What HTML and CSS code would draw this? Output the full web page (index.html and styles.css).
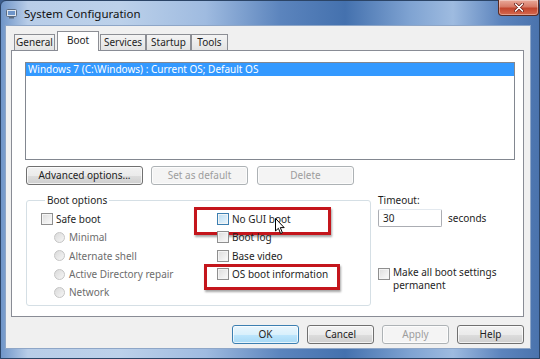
FILE: index.html
```html
<!DOCTYPE html>
<html>
<head>
<meta charset="utf-8">
<link rel="stylesheet" href="styles.css">
</head>
<body>
<div class="window">
  <div class="titlebar">
    <svg class="appicon" width="11" height="10" viewBox="0 0 11 10">
      <rect x="0.5" y="0.5" width="10" height="7" rx="1" fill="#dfe7f1" stroke="#5b6b80"/>
      <rect x="2" y="2" width="7" height="4" fill="#6e95c9"/>
      <rect x="3" y="8" width="5" height="1.5" fill="#5b6b80"/>
    </svg>
    <span class="title">System Configuration</span>
    <div class="close">
      <svg width="10" height="9" viewBox="0 0 10 9">
        <path d="M1.5 1 L8.5 8 M8.5 1 L1.5 8" stroke="#6b1b12" stroke-width="3" stroke-linecap="round"/>
        <path d="M1.5 1 L8.5 8 M8.5 1 L1.5 8" stroke="#ffffff" stroke-width="1.6" stroke-linecap="round"/>
      </svg>
    </div>
  </div>
  <div class="client">
    <div class="tabs">
      <div class="tab t1">General</div>
      <div class="tab active">Boot</div>
      <div class="tab t3">Services</div>
      <div class="tab t4">Startup</div>
      <div class="tab t5">Tools</div>
    </div>
    <div class="pane">
      <div class="listbox">
        <div class="item sel">Windows 7 (C:\Windows) : Current OS; Default OS</div>
      </div>
      <div class="btnrow">
        <div class="btn adv">Advanced options...</div>
        <div class="btn dis w97">Set as default</div>
        <div class="btn dis w97">Delete</div>
      </div>
      <div class="lower">
        <fieldset class="group">
          <legend>Boot options</legend>
          <div class="cols">
            <div class="col c1">
              <div class="row"><span class="chk"></span>Safe boot</div>
              <div class="row sub dim"><span class="radio"></span>Minimal</div>
              <div class="row sub dim"><span class="radio"></span>Alternate shell</div>
              <div class="row sub dim"><span class="radio"></span>Active Directory repair</div>
              <div class="row sub dim"><span class="radio"></span>Network</div>
            </div>
            <div class="col c2">
              <div class="row"><span class="chk hot"></span>No GUI boot
                <div class="mark m1"></div>
                <svg class="cursor" width="10" height="17" viewBox="0 0 10 17">
                  <path d="M0.5 0.5 L0.5 13 L3.4 10.3 L5.6 15.5 L7.4 14.7 L5.3 9.6 L9.2 9.6 Z" fill="#ffffff" stroke="#000000" stroke-width="1" stroke-linejoin="round"/>
                </svg>
              </div>
              <div class="row"><span class="chk"></span>Boot log</div>
              <div class="row"><span class="chk"></span>Base video</div>
              <div class="row"><span class="chk"></span>OS boot information
                <div class="mark m2"></div>
              </div>
            </div>
          </div>
        </fieldset>
        <div class="side">
          <div class="lbl">Timeout:</div>
          <div class="trow"><div class="input">30</div><span>seconds</span></div>
          <div class="perm"><span class="chk"></span><span class="ptext">Make all boot settings permanent</span></div>
        </div>
      </div>
    </div>
    <div class="dlgbtns">
      <div class="btn def">OK</div>
      <div class="btn">Cancel</div>
      <div class="btn dis">Apply</div>
      <div class="btn">Help</div>
    </div>
  </div>
</div>
</body>
</html>
```
FILE: styles.css
```css
* { box-sizing: border-box; }
html, body { margin: 0; padding: 0; }
body {
  width: 540px;
  height: 359px;
  overflow: hidden;
  font-family: "Noto Sans", "Open Sans", sans-serif;
  font-size: 10px;
  color: #1e1e1e;
  background: #3d5f8f;
}
.window {
  width: 540px;
  height: 359px;
  display: flex;
  flex-direction: column;
  padding: 0 8px 9px 4px;
  border-radius: 6px 6px 0 0;
  border: 1px solid #2b4466;
  background:
    linear-gradient(to right, #6f95c8 0%, #b8cde8 5%, #bcd1ea 22%, #9fbbe0 38%, #5b84bd 52%, #4471ae 64%, #7fa3d2 76%, #9ebbe0 84%, #5c84bd 93%, #4a73ad 100%);
}
.titlebar {
  height: 24px;
  flex: none;
  display: flex;
  align-items: center;
  position: relative;
  padding-left: 1px;
}
.appicon { flex: none; margin-top: 1px; }
.title {
  margin-left: 7px;
  font-size: 11.5px;
  color: #111;
  margin-top: 1px;
}
.close {
  position: absolute;
  right: -8px;
  top: -1px;
  width: 41px;
  height: 16px;
  border: 1px solid #5a2a22;
  border-top: none;
  border-radius: 0 0 4px 4px;
  background: linear-gradient(to bottom, #e9a99a 0%, #d77a66 45%, #c2452d 55%, #d4694f 100%);
  display: flex;
  align-items: center;
  justify-content: center;
  box-shadow: inset 0 0 0 1px rgba(255,255,255,0.35);
}
.client {
  flex: 1;
  background: #f0f0f0;
  border: 1px solid #8ea6c7;
  display: flex;
  flex-direction: column;
  padding: 0 6px 0 5px;
}
.tabs {
  display: flex;
  align-items: flex-end;
  height: 24px;
  padding-left: 3px;
  position: relative;
  z-index: 2;
}
.tab {
  height: 16px;
  border: 1px solid #8c8e94;
  border-bottom: none;
  background: linear-gradient(to bottom, #f4f4f4, #e3e3e3);
  line-height: 15px;
  text-align: center;
  color: #1e1e1e;
}
.t1 { width: 41px; margin-right: 2px; }
.t3 { width: 46px; }
.t4 { width: 45px; }
.t5 { width: 37px; }
.tab.active {
  width: 42px;
  height: 20px;
  margin: 0 1px -1px 0;
  background: #ffffff;
  line-height: 16px;
}
.pane {
  height: 267px;
  flex: none;
  background: #ffffff;
  border: 1px solid #898c95;
  padding: 11px 0 0 13px;
  display: flex;
  flex-direction: column;
}
.listbox {
  width: 490px;
  height: 98px;
  border: 1px solid #828790;
  background: #fff;
}
.item {
  height: 13px;
  line-height: 13px;
  padding-left: 2px;
}
.item.sel { background: #3399ff; color: #ffffff; }
.btn {
  height: 19px;
  line-height: 17px;
  text-align: center;
  border: 1px solid #707070;
  border-radius: 3px;
  background: linear-gradient(to bottom, #f2f2f2 0%, #ebebeb 50%, #dddddd 51%, #cfcfcf 100%);
  box-shadow: inset 0 0 0 1px rgba(255,255,255,0.7);
  color: #1e1e1e;
  width: 67px;
}
.btn.dis {
  color: #9d9d9d;
  border-color: #adb2b5;
  background: #f4f4f4;
}
.btn.def {
  border-color: #3c7fb1;
  background: linear-gradient(to bottom, #eaf6fd 0%, #d9f0fc 50%, #bee6fd 51%, #a7d9f5 100%);
}
.btnrow {
  display: flex;
  gap: 8px;
  margin-top: 6px;
  margin-left: 1px;
}
.btn.adv { width: 117px; }
.btn.w97 { width: 97px; }
.btnrow .btn.w97:last-child { margin-left: 1px; }
.lower {
  display: flex;
  margin-top: 9px;
  margin-left: 1px;
  gap: 7px;
}
.group {
  margin: 0;
  width: 345px;
  border: 1px solid #d5dfe5;
  border-radius: 3px;
  padding: 3px 0 4px 14px;
}
.group legend {
  padding: 0 2px;
  margin-left: 4px;
  line-height: 13px;
}
.cols { display: flex; }
.col { display: flex; flex-direction: column; }
.c1 { width: 176px; }
.row {
  position: relative;
  height: 18.3px;
  display: flex;
  align-items: center;
}
.row.sub { padding-left: 13px; }
.dim { color: #6d6d6d; }
.chk {
  flex: none;
  width: 12px;
  height: 12px;
  border: 1px solid #8f8f8f;
  background: linear-gradient(135deg, #dcdcdc, #fbfbfb);
  box-shadow: inset 0 0 0 1px #f4f4f4;
  margin-right: 3px;
}
.chk.hot {
  border-color: #3c7fb1;
  background: linear-gradient(135deg, #b9dcf2, #eaf6fd);
}
.radio {
  flex: none;
  width: 11px;
  height: 11px;
  border-radius: 50%;
  border: 1px solid #c5c5c5;
  background: linear-gradient(135deg, #dadada, #f6f6f6);
  margin-right: 4px;
}
.mark {
  position: absolute;
  border: 3px solid #c4161c;
  box-shadow: 1px 2px 2px rgba(0,0,0,0.35);
}
.m1 { left: -23px; top: -3px; width: 137px; height: 28px; }
.m2 { left: -13px; top: -1px; width: 136px; height: 26px; }
.cursor { position: absolute; left: 58px; top: 8px; }
.side { display: flex; flex-direction: column; }
.lbl { line-height: 13px; }
.trow {
  display: flex;
  align-items: center;
  margin-top: 2px;
  gap: 6px;
}
.input {
  width: 64px;
  height: 18px;
  border: 1px solid #abadb3;
  border-top-color: #e3e9ef;
  border-radius: 2px;
  padding-left: 4px;
  line-height: 16px;
  background: #fff;
}
.perm {
  display: flex;
  align-items: flex-start;
  margin-top: 39px;
}
.perm .chk { margin-top: 2px; }
.ptext { width: 120px; line-height: 13px; }
.dlgbtns {
  display: flex;
  justify-content: flex-end;
  gap: 8px;
  margin-top: 8px;
}
```
